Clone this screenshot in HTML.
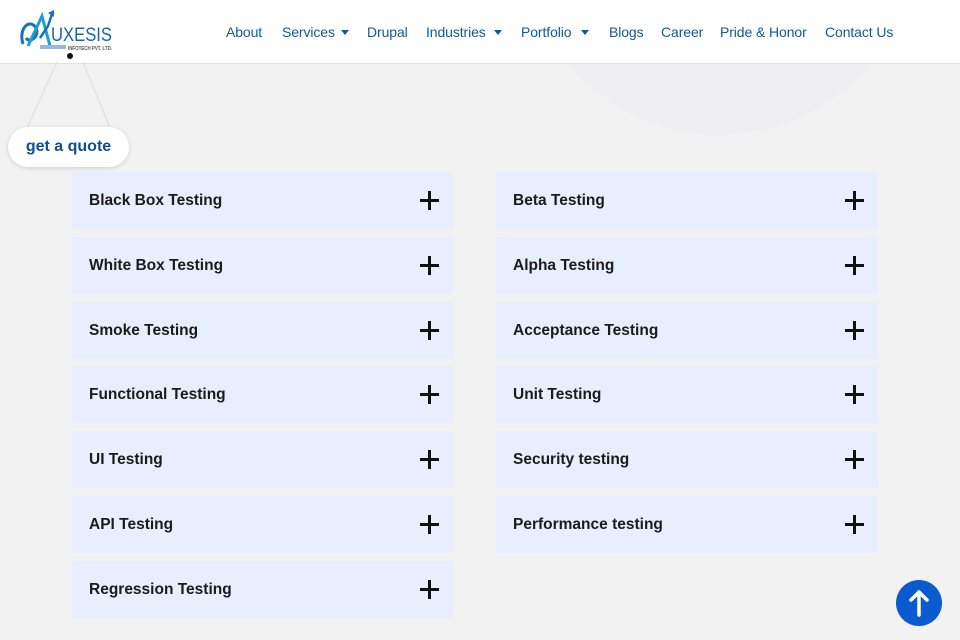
<!DOCTYPE html>
<html><head><meta charset="utf-8"><style>
*{margin:0;padding:0;box-sizing:border-box}
body{width:960px;height:640px;overflow:hidden;background:#f2f2f2;font-family:"Liberation Sans",sans-serif;position:relative}
.hdr{position:absolute;left:0;top:0;width:960px;height:64px;background:#fff;border-bottom:1px solid #e2e2e2;z-index:3}
.circ{position:absolute;left:523px;top:-257px;width:392px;height:392px;border-radius:50%;background:#efeff1;z-index:1}
.nav{position:absolute;top:24px;font-size:14px;color:#0b5b9c;letter-spacing:-0.1px;white-space:nowrap}
.car{position:absolute;top:30px;width:0;height:0;border-left:4px solid transparent;border-right:4px solid transparent;border-top:5px solid #0b5b9c}
.card{position:absolute;width:381px;height:57px;background:#e8eefe;border-radius:2px;z-index:2}
.card span{position:absolute;left:17px;top:20px;font-size:15.5px;font-weight:bold;color:#1b1b1b}
.card i{position:absolute;right:14px;top:19px;width:19px;height:19px}
.card i:before{content:"";position:absolute;left:0;top:8px;width:19px;height:2.6px;background:#111}
.card i:after{content:"";position:absolute;left:8.2px;top:0;width:2.6px;height:19px;background:#111}
.quote{position:absolute;left:8px;top:127px;width:121px;height:40px;background:#fff;border-radius:20px;box-shadow:0 1px 4px rgba(0,0,0,.15);z-index:4;font-weight:bold;color:#0d4f96;font-size:16px;text-align:center;line-height:39px}
.up{position:absolute;left:896px;top:580px;width:46px;height:46px;border-radius:50%;background:#0a5bd0;z-index:5}
</style></head><body>
<div class="circ"></div>
<div class="hdr">
 <svg style="position:absolute;left:18px;top:8px" width="96" height="46" viewBox="0 0 96 46">
  <path d="M5 36 C0 20 12 10 18 20 C22 28 12 36 8 30" fill="none" stroke="#1b6fb8" stroke-width="3"/>
  <path d="M10 38 L24 8 L32 38" fill="none" stroke="#1aa0d8" stroke-width="3"/>
  <path d="M22 30 L30 18 L34 6" fill="none" stroke="#1b6fb8" stroke-width="2.5"/>
  <path d="M30 5 L36 2 L36 9" fill="#1b6fb8"/>
  <text x="33" y="33" font-family="Liberation Sans" font-size="19" fill="#1464ad" textLength="61" lengthAdjust="spacingAndGlyphs">UXESIS</text>
  <rect x="22" y="37" width="26" height="4" fill="#9bb5d8"/>
  <text x="50" y="42" font-family="Liberation Sans" font-size="5.5" font-weight="bold" fill="#555" textLength="44" lengthAdjust="spacingAndGlyphs">INFOTECH PVT. LTD.</text>
 </svg>
 <span class="nav" style="left:226px">About</span>
 <span class="nav" style="left:282px">Services</span><span class="car" style="left:341px"></span>
 <span class="nav" style="left:367px">Drupal</span>
 <span class="nav" style="left:426px">Industries</span><span class="car" style="left:494px"></span>
 <span class="nav" style="left:521px">Portfolio</span><span class="car" style="left:581px"></span>
 <span class="nav" style="left:609px">Blogs</span>
 <span class="nav" style="left:661px">Career</span>
 <span class="nav" style="left:720px">Pride &amp; Honor</span>
 <span class="nav" style="left:825px">Contact Us</span>
</div>
<svg style="position:absolute;left:0;top:50px;z-index:4" width="140" height="90">
 <circle cx="70" cy="6" r="3" fill="#111"/>
 <path d="M57 12 L27 78 M83 12 L110 78" stroke="#e3e3e3" stroke-width="1.5" fill="none"/>
</svg>
<div class="quote">get a quote</div>

<div class="card" style="left:72px;top:172px"><span>Black Box Testing</span><i></i></div>
<div class="card" style="left:72px;top:237px"><span>White Box Testing</span><i></i></div>
<div class="card" style="left:72px;top:302px"><span>Smoke Testing</span><i></i></div>
<div class="card" style="left:72px;top:366px"><span>Functional Testing</span><i></i></div>
<div class="card" style="left:72px;top:431px"><span>UI Testing</span><i></i></div>
<div class="card" style="left:72px;top:496px"><span>API Testing</span><i></i></div>
<div class="card" style="left:72px;top:561px"><span>Regression Testing</span><i></i></div>

<div class="card" style="left:496px;top:172px;width:382px"><span>Beta Testing</span><i></i></div>
<div class="card" style="left:496px;top:237px;width:382px"><span>Alpha Testing</span><i></i></div>
<div class="card" style="left:496px;top:302px;width:382px"><span>Acceptance Testing</span><i></i></div>
<div class="card" style="left:496px;top:366px;width:382px"><span>Unit Testing</span><i></i></div>
<div class="card" style="left:496px;top:431px;width:382px"><span>Security testing</span><i></i></div>
<div class="card" style="left:496px;top:496px;width:382px"><span>Performance testing</span><i></i></div>

<div class="up"><svg width="46" height="46" viewBox="0 0 46 46"><path d="M23 35 V12 M15 20 L23 12 L31 20" stroke="#fff" stroke-width="3.5" fill="none" stroke-linecap="round" stroke-linejoin="round"/></svg></div>
</body></html>
